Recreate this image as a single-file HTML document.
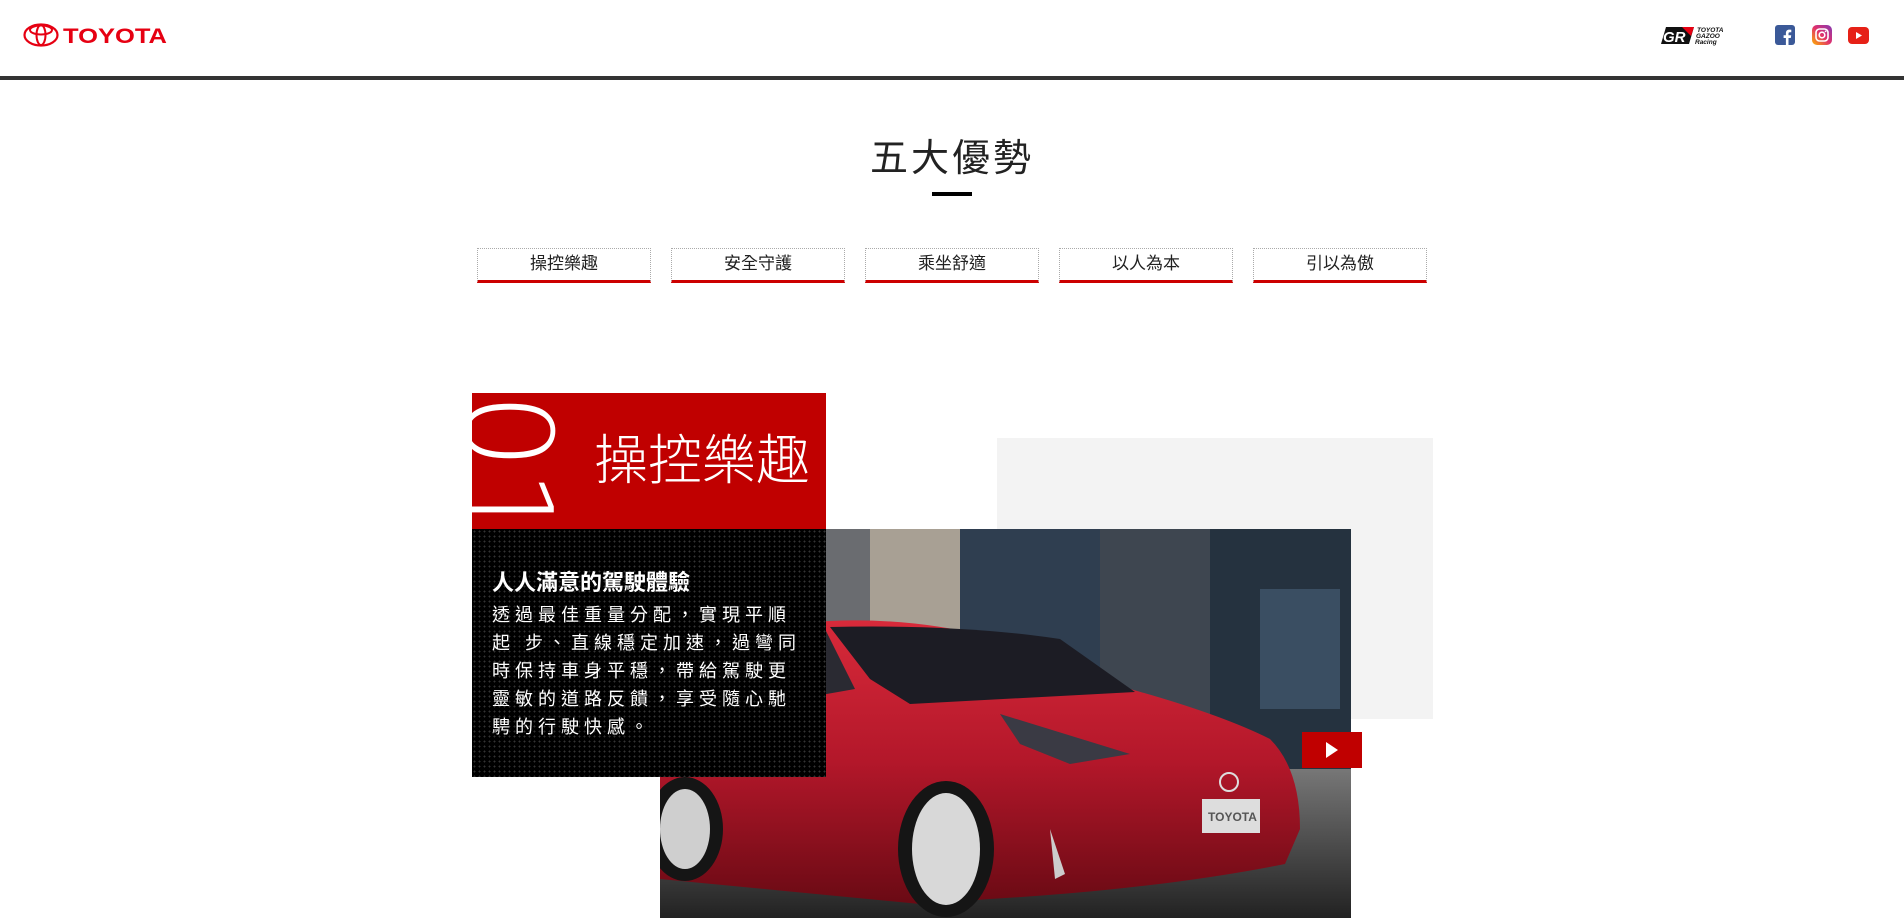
<!DOCTYPE html>
<html><head><meta charset="utf-8">
<style>
*{margin:0;padding:0;box-sizing:border-box}
body{width:1904px;height:918px;overflow:hidden;background:#fff;font-family:"Liberation Sans","Noto Sans CJK TC",sans-serif;position:relative}
.abs{position:absolute}
.line{left:0;top:76px;width:1904px;height:4px;background:#333}
.title{left:0;width:1904px;top:134px;text-align:center;font-size:38px;color:#222;letter-spacing:3px;line-height:50px}
.ul{left:932px;top:192px;width:40px;height:4px;background:#000}
.tab{top:248px;width:174px;height:35px;border:1px dotted #aaa;border-bottom:3px solid #c00;text-align:center;font-size:17px;line-height:29px;color:#222}
.red{left:472px;top:393px;width:354px;height:136px;background:#c00000;overflow:hidden}
.blk{left:472px;top:529px;width:354px;height:248px;background:#000;background-image:radial-gradient(#333 0.8px,transparent 1px);background-size:5px 5px}
.gray{left:997px;top:438px;width:436px;height:281px;background:#f3f3f3}
</style></head><body>
<svg class="abs" style="left:23px;top:23px" width="145" height="24" viewBox="0 0 145 24">
<ellipse cx="18" cy="12" rx="16.5" ry="10.5" fill="none" stroke="#e60012" stroke-width="2.2"/>
<ellipse cx="18" cy="12" rx="4.5" ry="10" fill="none" stroke="#e60012" stroke-width="2"/>
<ellipse cx="18" cy="7" rx="11" ry="4.5" fill="none" stroke="#e60012" stroke-width="2"/>
<text x="40" y="20" font-family="Liberation Sans" font-weight="bold" font-size="21" fill="#e60012" textLength="104" lengthAdjust="spacingAndGlyphs">TOYOTA</text>
</svg>
<svg class="abs" style="left:1660px;top:24px" width="70" height="22" viewBox="0 0 70 22">
<polygon points="6,3 34,3 29,20 1,20" fill="#111"/><polygon points="22,3 34,3 31,12" fill="#e60012"/>
<text x="3" y="18" font-family="Liberation Sans" font-weight="bold" font-style="italic" font-size="15" fill="#fff">GR</text>
<text x="37" y="8" font-size="6.5" font-weight="bold" font-style="italic" fill="#111">TOYOTA</text>
<text x="36" y="14" font-size="6.5" font-weight="bold" font-style="italic" fill="#111">GAZOO</text>
<text x="35" y="20" font-size="6.5" font-weight="bold" font-style="italic" fill="#111">Racing</text>
</svg>
<svg class="abs" style="left:1775px;top:25px" width="20" height="20" viewBox="0 0 20 20"><rect width="20" height="20" rx="3" fill="#3b5998"/><path d="M13.5 20v-7h2.3l.4-2.8h-2.7V8.5c0-.8.3-1.3 1.4-1.3h1.4V4.7c-.3 0-1.1-.1-2-.1-2 0-3.4 1.2-3.4 3.5v2.1H8.6V13h2.3v7z" fill="#fff"/></svg>
<svg class="abs" style="left:1812px;top:25px" width="20" height="20" viewBox="0 0 20 20"><defs><linearGradient id="ig" x1="0" y1="1" x2="1" y2="0"><stop offset="0" stop-color="#fdb200"/><stop offset=".5" stop-color="#e1306c"/><stop offset="1" stop-color="#833ab4"/></linearGradient></defs><rect width="20" height="20" rx="5" fill="url(#ig)"/><rect x="4" y="4" width="12" height="12" rx="3.5" fill="none" stroke="#fff" stroke-width="1.6"/><circle cx="10" cy="10" r="2.8" fill="none" stroke="#fff" stroke-width="1.6"/><circle cx="13.6" cy="6.4" r=".9" fill="#fff"/></svg>
<svg class="abs" style="left:1848px;top:27px" width="21" height="17" viewBox="0 0 21 17"><rect width="21" height="17" rx="4" fill="#e62117"/><polygon points="8,5 14,8.5 8,12" fill="#fff"/></svg>
<div class="abs line"></div>
<div class="abs title">五大優勢</div>
<div class="abs ul"></div>
<div class="abs tab" style="left:477px">操控樂趣</div>
<div class="abs tab" style="left:671px">安全守護</div>
<div class="abs tab" style="left:865px">乘坐舒適</div>
<div class="abs tab" style="left:1059px">以人為本</div>
<div class="abs tab" style="left:1253px">引以為傲</div>
<div class="abs gray"></div>
<svg class="abs" style="left:660px;top:529px" width="691" height="389" viewBox="0 0 691 389">
<defs>
<linearGradient id="car" x1="0" y1="0" x2="0" y2="1"><stop offset="0" stop-color="#d82a3a"/><stop offset=".5" stop-color="#b3172a"/><stop offset="1" stop-color="#6a0a14"/></linearGradient>
<linearGradient id="road" x1="0" y1="0" x2="0" y2="1"><stop offset="0" stop-color="#777"/><stop offset="1" stop-color="#222"/></linearGradient>
</defs>
<rect width="691" height="389" fill="#2a3542"/>
<rect x="0" y="0" width="55" height="260" fill="#8c7e6e"/>
<rect x="60" y="0" width="40" height="200" fill="#3c4c5e"/>
<rect x="100" y="0" width="40" height="200" fill="#9a9488"/>
<rect x="140" y="0" width="70" height="200" fill="#6a6c70"/>
<rect x="210" y="0" width="90" height="220" fill="#a8a094"/>
<rect x="300" y="0" width="140" height="200" fill="#2f3e50"/>
<rect x="440" y="0" width="110" height="240" fill="#3e4650"/>
<rect x="550" y="0" width="141" height="240" fill="#25323f"/>
<rect x="600" y="60" width="80" height="120" fill="#3a4e62"/>
<rect x="0" y="240" width="691" height="149" fill="url(#road)"/>
<path d="M0 105 Q60 90 120 95 L170 92 Q320 85 470 160 Q560 185 610 210 Q640 240 640 300 L625 335 Q500 360 330 370 L260 375 L0 350 Z" fill="url(#car)"/>
<path d="M170 98 Q300 95 400 110 L475 163 L250 175 L210 150 Z" fill="#1c1c24"/>
<path d="M90 110 L165 100 L195 160 L110 175 Z" fill="#2a2a32"/>
<path d="M340 185 L470 225 L410 235 L360 215 Z" fill="#3a3a44"/>
<path d="M390 300 L405 345 L395 350 Z" fill="#ccc"/>
<ellipse cx="25" cy="300" rx="38" ry="52" fill="#151515"/><ellipse cx="25" cy="300" rx="25" ry="40" fill="#cfcfcf"/>
<ellipse cx="286" cy="320" rx="48" ry="68" fill="#151515"/><ellipse cx="286" cy="320" rx="34" ry="56" fill="#d8d8d8"/>
<rect x="542" y="270" width="58" height="34" fill="#ddd"/>
<text x="548" y="292" font-size="12" font-weight="bold" fill="#555">TOYOTA</text>
<circle cx="569" cy="253" r="9" fill="none" stroke="#ddd" stroke-width="2"/>
</svg>
<div class="abs red">
<svg class="abs" style="left:0;top:0" width="354" height="136">
<text transform="translate(-6,0) rotate(90)" font-family="DejaVu Sans" font-weight="200" font-size="120" fill="#fff">01</text>
</svg>
<div class="abs" style="left:122px;top:38px;font-size:54px;color:#fff;font-weight:300;line-height:60px;white-space:nowrap">操控樂趣</div>
</div>
<div class="abs blk">
<div class="abs" style="left:20px;top:36px;font-size:22px;font-weight:bold;color:#fff;white-space:nowrap">人人滿意的駕駛體驗</div>
<div class="abs" style="left:20px;top:72px;width:318px;font-size:18px;line-height:28px;letter-spacing:5px;color:#fff">透過最佳重量分配，實現平順起 步、直線穩定加速，過彎同時保持車身平穩，帶給駕駛更靈敏的道路反饋，享受隨心馳騁的行駛快感。</div>
</div>
<div class="abs" style="left:1302px;top:732px;width:60px;height:36px;background:#c00000"></div>
<svg class="abs" style="left:1302px;top:732px" width="60" height="36"><polygon points="24,10 36,18 24,26" fill="#fff"/></svg>
</body></html>
